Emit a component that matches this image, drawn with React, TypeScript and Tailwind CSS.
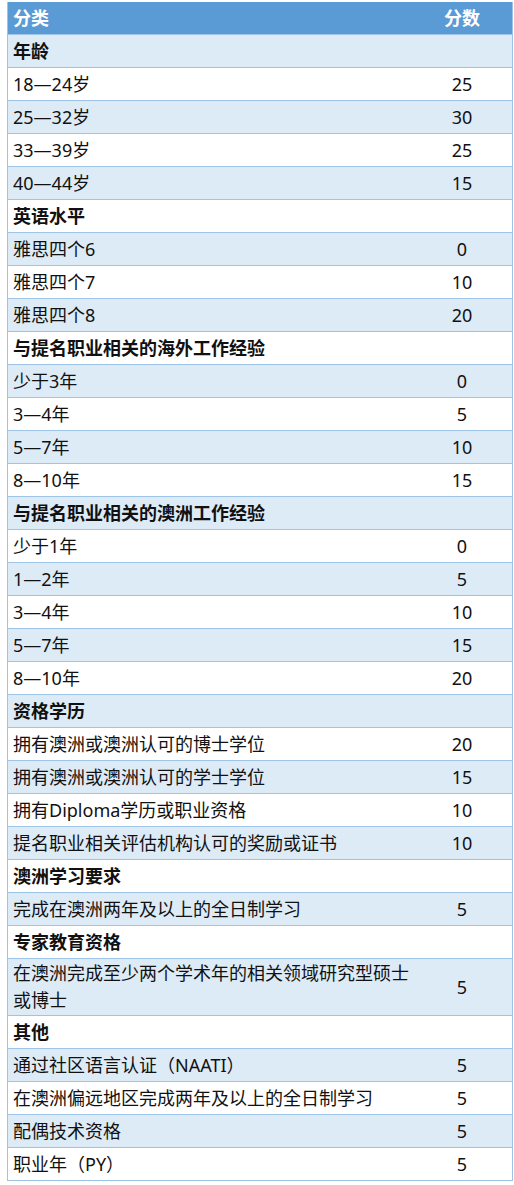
import React from "react";

type Row = { label: string; score?: string; head?: boolean; tall?: boolean };

const rows: Row[] = [
  { label: "年龄", head: true },
  { label: "18—24岁", score: "25" },
  { label: "25—32岁", score: "30" },
  { label: "33—39岁", score: "25" },
  { label: "40—44岁", score: "15" },
  { label: "英语水平", head: true },
  { label: "雅思四个6", score: "0" },
  { label: "雅思四个7", score: "10" },
  { label: "雅思四个8", score: "20" },
  { label: "与提名职业相关的海外工作经验", head: true },
  { label: "少于3年", score: "0" },
  { label: "3—4年", score: "5" },
  { label: "5—7年", score: "10" },
  { label: "8—10年", score: "15" },
  { label: "与提名职业相关的澳洲工作经验", head: true },
  { label: "少于1年", score: "0" },
  { label: "1—2年", score: "5" },
  { label: "3—4年", score: "10" },
  { label: "5—7年", score: "15" },
  { label: "8—10年", score: "20" },
  { label: "资格学历", head: true },
  { label: "拥有澳洲或澳洲认可的博士学位", score: "20" },
  { label: "拥有澳洲或澳洲认可的学士学位", score: "15" },
  { label: "拥有Diploma学历或职业资格", score: "10" },
  { label: "提名职业相关评估机构认可的奖励或证书", score: "10" },
  { label: "澳洲学习要求", head: true },
  { label: "完成在澳洲两年及以上的全日制学习", score: "5" },
  { label: "专家教育资格", head: true },
  { label: "在澳洲完成至少两个学术年的相关领域研究型硕士或博士", score: "5", tall: true },
  { label: "其他", head: true },
  { label: "通过社区语言认证（NAATI）", score: "5" },
  { label: "在澳洲偏远地区完成两年及以上的全日制学习", score: "5" },
  { label: "配偶技术资格", score: "5" },
  { label: "职业年（PY）", score: "5" },
];

export default function App() {
  return (
    <div
      className="w-[514px] min-h-[1185px] bg-white pt-[2px] pl-[7px] pr-[1px] text-[18px] text-[#111]"
      style={{ fontFamily: '"Noto Sans", "Noto Sans CJK SC", sans-serif' }}
    >
      <div className="border-x border-[#9dc3e6]">
        {/* header */}
        <div className="flex h-[32px] items-center bg-[#5b9bd5] font-bold text-white">
          <div className="w-[410px] pl-[5px]">分类</div>
          <div className="flex-1 pr-[6px] text-center">分数</div>
        </div>
        {rows.map((r, i) => (
          <div
            key={i}
            className={
              "flex items-center border-t border-[#9dc3e6] " +
              (r.tall ? "h-[57px] " : "h-[33px] ") +
              (i % 2 === 0 ? "bg-[#ddebf7]" : "bg-white")
            }
          >
            <div
              className={
                "w-[410px] pl-[5px] pr-[4px] " +
                (r.tall ? "leading-[27px] " : "leading-[24px] ") +
                (r.head ? "font-bold" : "")
              }
            >
              {r.label}
            </div>
            <div className="flex-1 pr-[6px] text-center">{r.score}</div>
          </div>
        ))}
        <div className="border-t border-[#9dc3e6]" />
      </div>
    </div>
  );
}
